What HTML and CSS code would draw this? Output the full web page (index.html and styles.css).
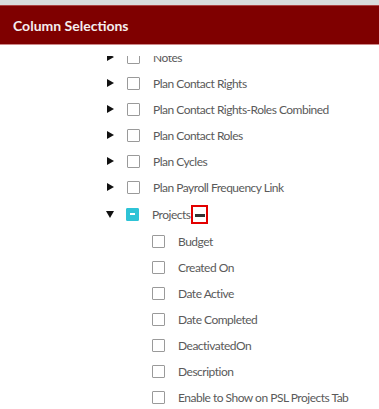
FILE: index.html
```html
<!DOCTYPE html>
<html lang="en">
<head>
  <meta charset="UTF-8" />
  <title>Column Selections</title>
  <link rel="stylesheet" href="styles.css">
</head>
<body>
  <div class="topbar"></div>
  <div class="header">Column Selections</div>

  <div class="content">
    <div class="viewport">
      <ul class="tree">
        <li class="row"><span class="caret right"></span><span class="box"></span><span class="label">Notes</span></li>
        <li class="row"><span class="caret right"></span><span class="box"></span><span class="label">Plan Contact Rights</span></li>
        <li class="row"><span class="caret right"></span><span class="box"></span><span class="label">Plan Contact Rights-Roles Combined</span></li>
        <li class="row"><span class="caret right"></span><span class="box"></span><span class="label">Plan Contact Roles</span></li>
        <li class="row"><span class="caret right"></span><span class="box"></span><span class="label">Plan Cycles</span></li>
        <li class="row"><span class="caret right"></span><span class="box"></span><span class="label">Plan Payroll Frequency Link</span></li>
        <li class="row open"><span class="caret down"></span><span class="box partial"></span><span class="label">Projects</span><span class="collapse"><span class="dash"></span></span></li>
        <li class="row child"><span class="box"></span><span class="label">Budget</span></li>
        <li class="row child"><span class="box"></span><span class="label">Created On</span></li>
        <li class="row child"><span class="box"></span><span class="label">Date Active</span></li>
        <li class="row child"><span class="box"></span><span class="label">Date Completed</span></li>
        <li class="row child"><span class="box"></span><span class="label">DeactivatedOn</span></li>
        <li class="row child"><span class="box"></span><span class="label">Description</span></li>
        <li class="row child"><span class="box"></span><span class="label">Enable to Show on PSL Projects Tab</span></li>
      </ul>
    </div>
  </div>
</body>
</html>
```

FILE: styles.css
```css
* {
  box-sizing: border-box;
}

body {
  margin: 0;
  font-family: Lato, "Open Sans", sans-serif;
  background: #fff;
  height: 409px;
  overflow: hidden;
}

.topbar {
  height: 5px;
  background: #d9dcdc;
}

.header {
  height: 40px;
  background: #7f0000;
  color: #f4eeee;
  font-weight: bold;
  font-size: 14px;
  display: flex;
  align-items: center;
  padding-left: 13px;
  border-top: 1px solid #a44;
  border-bottom: 1px solid #c88;
}

.content {
  padding-top: 11px;
}

.viewport {
  height: 360px;
  overflow: hidden;
}

.tree {
  list-style: none;
  margin: -12px 0 0 0;
  padding: 0 0 0 107px;
}

.row {
  height: 26px;
  display: flex;
  align-items: center;
  font-size: 12px;
  color: #5a5a5a;
  letter-spacing: -0.5px;
}

.row.open {
  height: 28px;
}

.row.child {
  padding-left: 45px;
}

.caret {
  width: 7px;
  height: 9px;
  margin-right: 13px;
  display: inline-block;
}

.caret.right {
  border-top: 4.5px solid transparent;
  border-bottom: 4.5px solid transparent;
  border-left: 7px solid #111;
  height: 0;
  width: 0;
}

.caret.down {
  border-left: 4.5px solid transparent;
  border-right: 4.5px solid transparent;
  border-top: 7px solid #111;
  width: 0;
  height: 0;
  margin-left: -1px;
  margin-right: 12px;
}

.box {
  width: 13px;
  height: 13px;
  border: 1.5px solid #9a9a9a;
  border-radius: 1px;
  margin-right: 13px;
  flex: none;
}

.box.partial {
  background: #2ec3d6;
  border-color: #2ec3d6;
  position: relative;
}

.box.partial::after {
  content: "";
  position: absolute;
  left: 3px;
  top: 4.5px;
  width: 5px;
  height: 1.5px;
  background: #fff;
}

.collapse {
  width: 17px;
  height: 19px;
  border: 2px solid #e30000;
  display: flex;
  align-items: center;
  justify-content: center;
  margin-left: 1px;
}

.dash {
  width: 10px;
  height: 3px;
  background: #333;
  margin-top: 2px;
}
```
